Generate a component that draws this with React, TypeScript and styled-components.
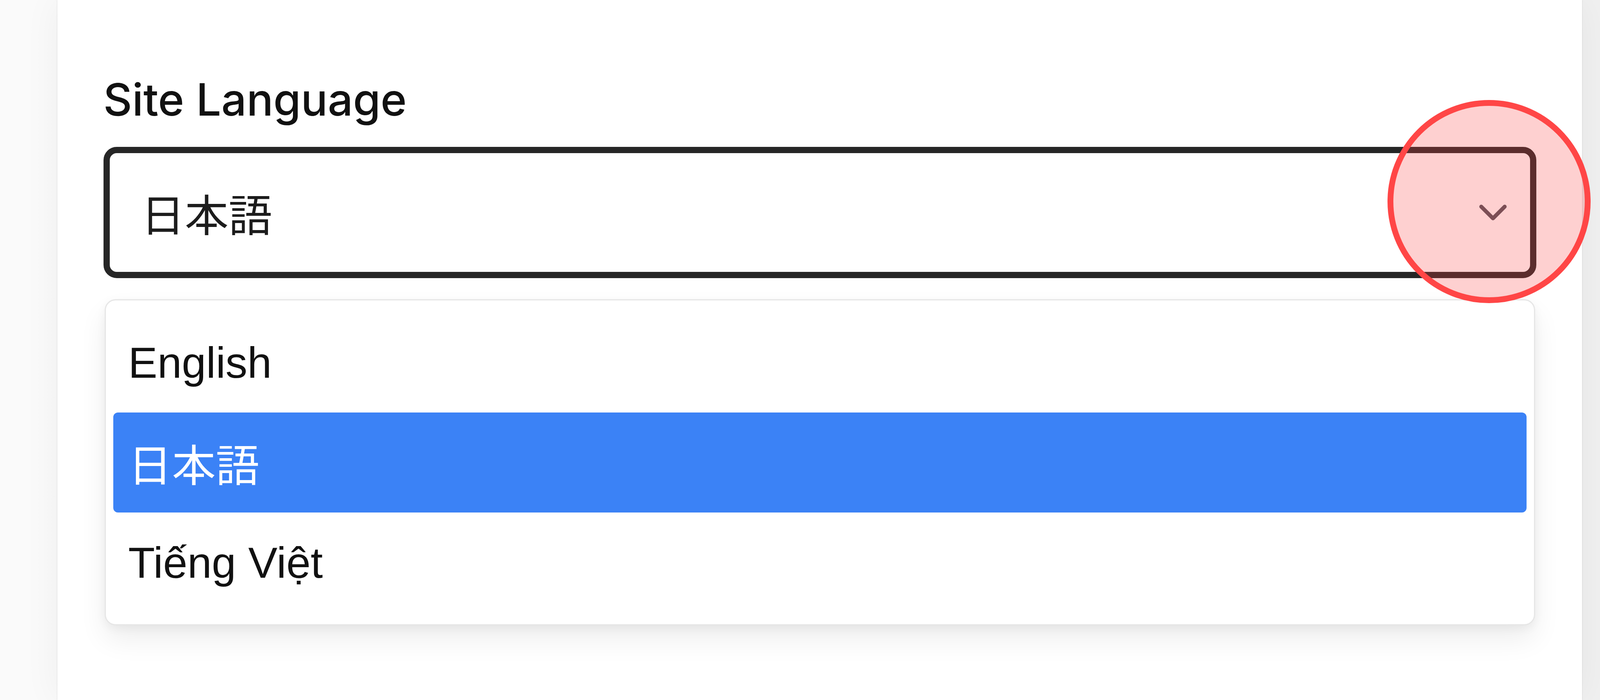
import React from "react";
import styled, { createGlobalStyle } from "styled-components";
import { ChevronDown } from "lucide-react";

const GlobalStyle = createGlobalStyle`
  html, body {
    margin: 0;
    padding: 0;
    background: #f4f4f4;
  }
  * { box-sizing: border-box; }
`;

/* Horizontal measures follow the viewport width (reference: 6472px wide),
   vertical measures and type stay in px. */
const Page = styled.div`
  display: flex;
  width: 100%;
  height: 100vh;
  padding: 0 1.112vw 0 3.585vw;
  overflow: hidden;
  background: linear-gradient(90deg, #fafafa 0%, #f7f7f7 55%, #f0f0f0 100%);
`;

const Card = styled.main`
  flex: 1;
  min-width: 0;
  background: #ffffff;
  padding: 186px 2.858vw 0 2.874vw;
  box-shadow: 0 0 3px rgba(0, 0, 0, 0.14), 0 0 90px rgba(0, 0, 0, 0.05);
`;

const Field = styled.div`
  display: flex;
  flex-direction: column;
`;

const Label = styled.label`
  font-family: Inter, "Noto Sans", sans-serif;
  font-weight: 500;
  font-size: 114px;
  line-height: 138px;
  color: #111111;
  margin-bottom: 52px;
`;

const SelectWrap = styled.div`
  position: relative;
`;

const SelectBox = styled.div`
  height: 336px;
  border: 16px solid #262626;
  border-radius: 34px;
  background: #ffffff;
  display: flex;
  align-items: center;
  justify-content: space-between;
  padding: 0 calc(2.72vw - 76px) 0 1.962vw;
`;

const Value = styled.span`
  font-family: "Liberation Sans", "Noto Sans CJK JP", sans-serif;
  font-size: 112px;
  color: #1c1c1c;
`;

const Chevron = styled(ChevronDown)`
  color: #52525b;
  flex-shrink: 0;
`;

const Highlight = styled.div`
  position: absolute;
  top: -120px;
  right: calc(2.967vw - 260px);
  width: 520px;
  height: 520px;
  border-radius: 50%;
  border: 15px solid #ff4646;
  background: rgba(250, 66, 66, 0.25);
  z-index: 2;
  pointer-events: none;
`;

const Menu = styled.ul`
  position: absolute;
  top: calc(100% + 54px);
  left: 0.093vw;
  right: 0.093vw;
  margin: 0;
  list-style: none;
  background: #ffffff;
  border: 3px solid #e6e6e6;
  border-radius: 28px;
  padding: 31px 0.464vw 30px;
  box-shadow: 0 36px 70px rgba(0, 0, 0, 0.07), 0 8px 24px rgba(0, 0, 0, 0.05);
  z-index: 1;
`;

const Option = styled.li<{ $selected?: boolean }>`
  height: 256px;
  display: flex;
  align-items: center;
  padding-left: 0.927vw;
  border-radius: 12px;
  font-family: "Liberation Sans", "Noto Sans CJK JP", sans-serif;
  font-size: 112px;
  color: ${(p) => (p.$selected ? "#ffffff" : "#111111")};
  background: ${(p) => (p.$selected ? "#3b82f6" : "transparent")};
`;

const options = [
  { label: "English" },
  { label: "日本語", selected: true },
  { label: "Tiếng Việt" },
];

export default function App() {
  return (
    <>
      <GlobalStyle />
      <Page>
        <Card>
          <Field>
            <Label>Site Language</Label>
            <SelectWrap>
              <SelectBox>
                <Value>日本語</Value>
                <Chevron size={120} strokeWidth={2} />
              </SelectBox>
              <Highlight />
              <Menu>
                {options.map((o) => (
                  <Option key={o.label} $selected={o.selected}>
                    {o.label}
                  </Option>
                ))}
              </Menu>
            </SelectWrap>
          </Field>
        </Card>
      </Page>
    </>
  );
}
